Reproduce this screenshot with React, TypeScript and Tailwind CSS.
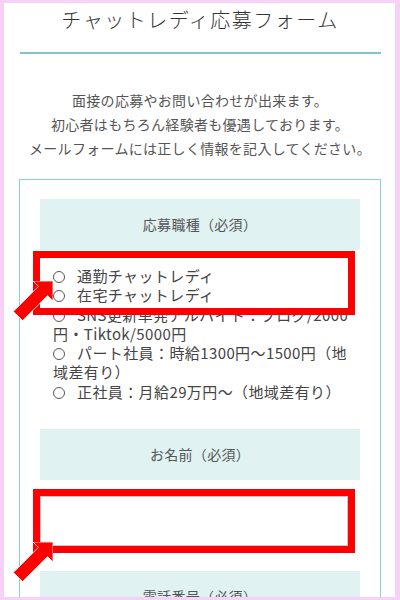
import React from 'react';

const FONT = { fontFamily: '"Noto Sans CJK JP", "Noto Sans", sans-serif' };

const JOBS = [
  '通勤チャットレディ',
  '在宅チャットレディ',
  'SNS更新単発アルバイト：ブログ/2000円・Tiktok/5000円',
  'パート社員：時給1300円～1500円（地域差有り）',
  '正社員：月給29万円～（地域差有り）',
];

// red arrow used for the annotations
const Arrow = ({ className }: { className: string }) => (
  <svg className={className} width="40" height="40" viewBox="0 0 40 40">
    <polygon
      points="40,0 40,20 34.6,14.6 9.6,39.6 0.4,30.4 25.4,5.4 20,0"
      fill="#ff0000"
      stroke="#ffffff"
      strokeWidth="0.8"
      strokeLinejoin="miter"
    />
  </svg>
);

const Label = ({ children }: { children: React.ReactNode }) => (
  <div className="h-[51px] bg-[#e0f2f2] flex items-center justify-center text-[14px] tracking-[0.3px] text-[#555]">
    {children}
  </div>
);

export default function App() {
  return (
    <div
      style={FONT}
      className="w-[400px] h-[600px] overflow-hidden bg-white border-[#f8d2f6] border-t-[3px] border-l-[4px] border-r-[5px] border-b-[3px]"
    >
      <div className="pl-[15px] pr-[14px]">
        <h1 className="pt-[3px] leading-[28px] text-center text-[20px] font-light tracking-[1.5px] text-[#333]">
          チャットレディ応募フォーム
        </h1>
        <div className="mt-[18px] ml-[1px] h-[2px] bg-[#7fc5c9]" />

        <p className="mt-[34px] text-center text-[14px] leading-[24px] tracking-[0.3px] text-[#555]">
          面接の応募やお問い合わせが出来ます。
          <br />
          初心者はもちろん経験者も優遇しております。
          <br />
          メールフォームには正しく情報を記入してください。
        </p>

        <div className="mt-[19px] border border-[#8ccfd1] px-[20px] pt-[19px] pb-[40px]">
          <Label>応募職種（必須）</Label>

          <div className="relative mt-[16px] pl-[13px] pr-[4px] text-[15px] leading-[19.3px] tracking-[0.4px] text-[#444]">
            {JOBS.map((job) => (
              <div key={job}>
                <span className="inline-block align-[-1px] w-[12px] h-[12px] rounded-full border-[1.5px] border-[#555] mr-[12px]" />
                {job}
              </div>
            ))}
            <div className="absolute left-[-7px] top-[-15px] w-[322px] h-[64px] border-[7px] border-[#ff0000]" />
            <Arrow className="absolute left-[-27px] top-[15px]" />
          </div>

          <div className="mt-[28px]">
            <Label>お名前（必須）</Label>
          </div>

          <div className="relative mt-[16px] w-[308px] h-[50px]">
            <input
              type="text"
              className="block w-full h-full border border-[#c8c8c8] bg-white outline-none"
            />
            <div className="absolute -inset-[7px] border-[7px] border-[#ff0000]" />
            <Arrow className="absolute left-[-27px] top-[46px]" />
          </div>

          <div className="mt-[25px]">
            <Label>電話番号（必須）</Label>
          </div>
        </div>
      </div>
    </div>
  );
}
